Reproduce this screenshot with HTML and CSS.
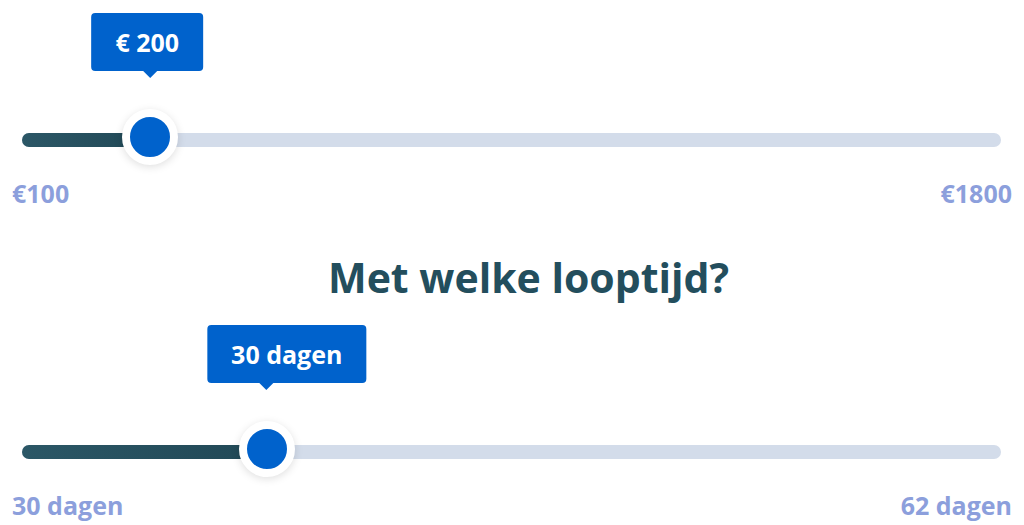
FILE: index.html
```
<!DOCTYPE html>
<html lang="nl">
<head>
  <meta charset="UTF-8" />
  <meta name="viewport" content="width=device-width, initial-scale=1.0" />
  <title>Lening berekenen</title>
  <link rel="stylesheet" href="styles.css">
</head>
<body>

  <div class="calculator">

    <div class="slider slider-amount">
      <div class="track">
        <div class="fill" style="width: 13.1%"></div>
        <div class="thumb" style="left: 13.1%">
          <div class="bubble" style="--shift: -3px">€ 200</div>
        </div>
      </div>
      <div class="range-labels">
        <span>€100</span>
        <span>€1800</span>
      </div>
    </div>

    <h2 class="question">Met welke looptijd?</h2>

    <div class="slider slider-term">
      <div class="track">
        <div class="fill" style="width: 25%"></div>
        <div class="thumb" style="left: 25%">
          <div class="bubble" style="--shift: 20px">30 dagen</div>
        </div>
      </div>
      <div class="range-labels">
        <span>30 dagen</span>
        <span>62 dagen</span>
      </div>
    </div>

  </div>

</body>
</html>
```

FILE: styles.css
```
body {
  margin: 0;
  font-family: "Open Sans", "Liberation Sans", sans-serif;
  background: #fff;
}

.calculator {
  padding: 0 12px;
}

.slider-amount {
  padding-top: 133px;
}

.slider-term {
  padding-top: 140px;
}

.track {
  position: relative;
  height: 14px;
  margin: 0 11px 0 10px;
  background: #d3dcea;
  border-radius: 7px;
}

.fill {
  height: 100%;
  border-radius: 7px 0 0 7px;
  background: linear-gradient(to right, #2b5766, #214856);
}

.thumb {
  position: absolute;
  top: -24px;
  width: 40px;
  height: 40px;
  margin-left: -28px;
  border: 8px solid #fff;
  border-radius: 50%;
  background: #0062cc;
  box-shadow: 0 2px 8px rgba(0,0,0,0.13);
}

.bubble {
  --shift: 0px;
  position: absolute;
  left: 50%;
  bottom: 86px;
  transform: translateX(calc(-50% + var(--shift)));
  padding: 12px 24px;
  background: #0062cc;
  color: #fff;
  font-size: 25px;
  font-weight: 700;
  line-height: 34px;
  white-space: nowrap;
  border-radius: 4px;
}

.bubble::after {
  content: "";
  position: absolute;
  left: calc(50% - var(--shift));
  bottom: -7px;
  margin-left: -7px;
  border-left: 7px solid transparent;
  border-right: 7px solid transparent;
  border-top: 7px solid #0062cc;
}

.range-labels {
  display: flex;
  justify-content: space-between;
  margin-top: 29px;
  color: #8c9fdc;
  font-size: 25px;
  font-weight: 700;
  line-height: 34px;
}

.question {
  margin: 39px 0 0;
  padding-left: 33px;
  text-align: center;
  color: #234e5d;
  font-size: 41px;
  font-weight: 700;
  line-height: 56px;
}
```
